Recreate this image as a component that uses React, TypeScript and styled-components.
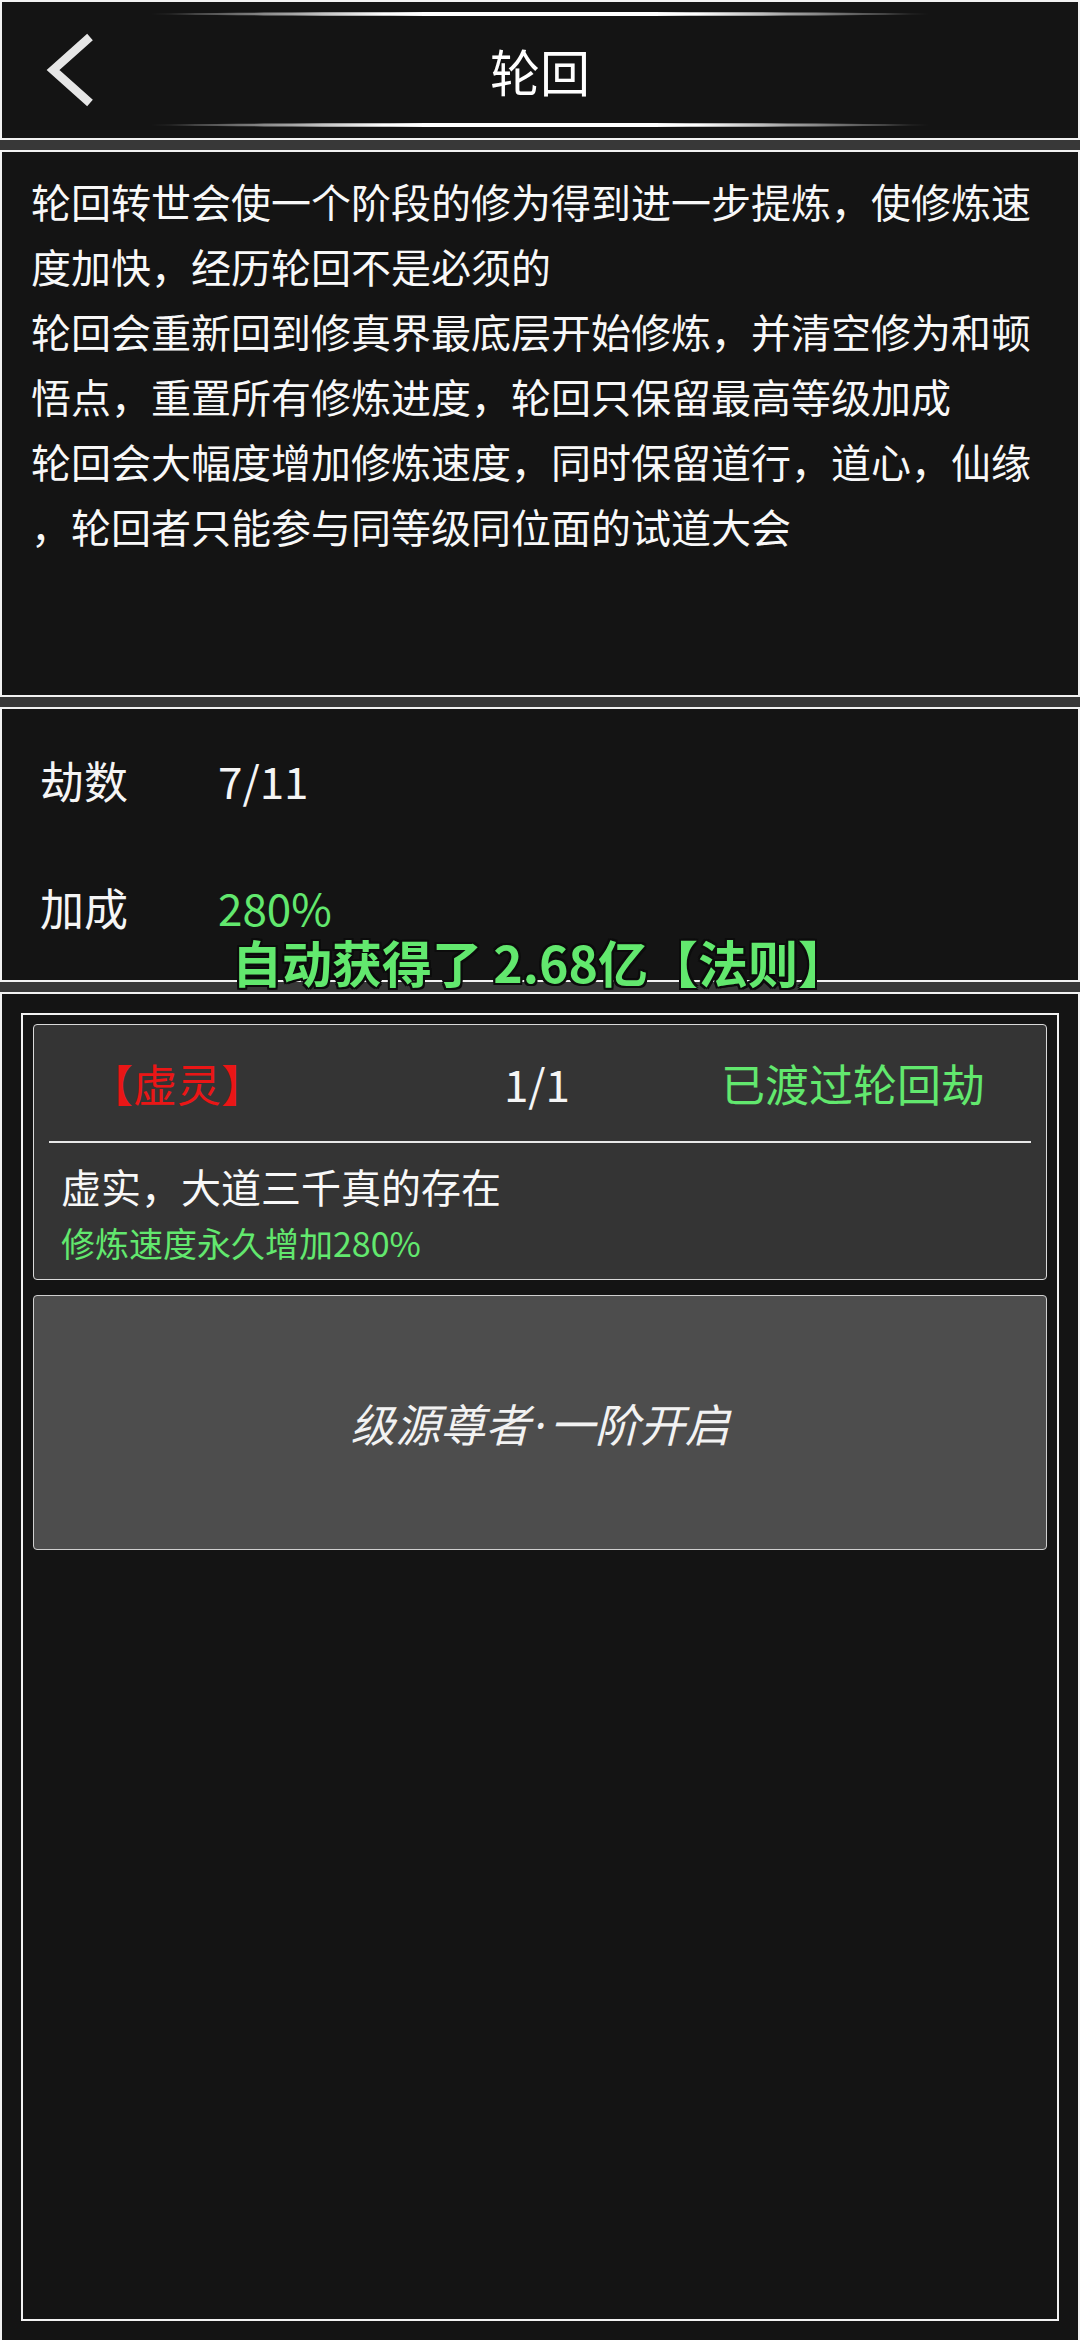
import React from "react";
import styled, { createGlobalStyle } from "styled-components";

const GlobalStyle = createGlobalStyle`
  html, body {
    margin: 0;
    padding: 0;
    overflow: hidden;
    background: #383838;
  }
  * { box-sizing: border-box; }
`;

const GREEN = "#62e86e";

function App() {
  return (
    <>
      <GlobalStyle />
      <Page>
        <Panel $h={140}>
          <Header>
            <Glow />
            <TitleRow>
              <BackButton>
                <svg width="60" height="80" viewBox="0 0 60 80">
                  <path d="M50 7 L13 40 L50 73" fill="none" stroke="#e6e6e6" strokeWidth="8.5" />
                </svg>
              </BackButton>
              <Title>轮回</Title>
              <span />
            </TitleRow>
            <Glow />
          </Header>
        </Panel>

        <Panel $h={547}>
          <Description>
            <p>轮回转世会使一个阶段的修为得到进一步提炼，使修炼速度加快，经历轮回不是必须的</p>
            <p>轮回会重新回到修真界最底层开始修炼，并清空修为和顿悟点，重置所有修炼进度，轮回只保留最高等级加成</p>
            <p>轮回会大幅度增加修炼速度，同时保留道行，道心，仙缘，轮回者只能参与同等级同位面的试道大会</p>
          </Description>
        </Panel>

        <Panel $h={275}>
          <Stats>
            <StatLabel>劫数</StatLabel>
            <StatValue>7/11</StatValue>
            <StatLabel>加成</StatLabel>
            <StatValue $color={GREEN}>280%</StatValue>
          </Stats>
        </Panel>

        <Panel>
          <Frame>
            <Card>
              <CardHead>
                <Tag>【虚灵】</Tag>
                <Count>1/1</Count>
                <Status>已渡过轮回劫</Status>
              </CardHead>
              <Divider />
              <CardBody>
                <CardTitle>虚实，大道三千真的存在</CardTitle>
                <CardEffect>修炼速度永久增加280%</CardEffect>
              </CardBody>
            </Card>
            <LockedCard>
              <LockedText>
                级源尊者<Dot>·</Dot>一阶开启
              </LockedText>
            </LockedCard>
          </Frame>
        </Panel>

        <Toast>自动获得了 2.68亿【法则】</Toast>
      </Page>
    </>
  );
}

const Page = styled.div`
  position: relative;
  width: 1080px;
  height: 2344px;
  display: flex;
  flex-direction: column;
  gap: 10px;
  background: #383838;
  font-family: "Noto Sans CJK SC", "Noto Sans", sans-serif;
  color: #fff;
`;

const Panel = styled.section<{ $h?: number }>`
  flex: ${(p) => (p.$h ? `0 0 ${p.$h}px` : "1 1 auto")};
  display: flex;
  flex-direction: column;
  background: #141414;
  border: 2px solid #f2f2f2;
`;

const Header = styled.header`
  flex: 1;
  display: flex;
  flex-direction: column;
  padding: 10px 0 11px;
`;

const Glow = styled.div`
  width: 780px;
  height: 4px;
  margin: 0 auto;
  border-radius: 50%;
  background: linear-gradient(
    90deg,
    rgba(255, 255, 255, 0) 0%,
    rgba(255, 255, 255, 0.35) 10%,
    #ffffff 30%,
    #ffffff 70%,
    rgba(255, 255, 255, 0.35) 90%,
    rgba(255, 255, 255, 0) 100%
  );
`;

const TitleRow = styled.div`
  flex: 1;
  display: grid;
  grid-template-columns: 140px 1fr 140px;
  align-items: center;
`;

const BackButton = styled.div`
  display: flex;
  align-items: center;
  padding-left: 38px;
`;

const Title = styled.h1`
  margin: 0;
  text-align: center;
  font-size: 50px;
  font-weight: 400;
  line-height: 1;
  color: #ffffff;
`;

const Description = styled.div`
  padding: 17px 29px;
  font-size: 40px;
  line-height: 65px;
  color: #f8f8f8;
  line-break: anywhere;
  word-break: break-all;

  p {
    margin: 0;
  }
`;

const Stats = styled.div`
  display: grid;
  grid-template-columns: 178px auto;
  grid-auto-rows: 64px;
  row-gap: 63px;
  align-items: center;
  padding: 39px 38px 0;
  font-size: 44px;
  line-height: 64px;
`;

const StatLabel = styled.span`
  color: #f5f5f5;
`;

const StatValue = styled.span<{ $color?: string }>`
  color: ${(p) => p.$color || "#f5f5f5"};
`;

const Toast = styled.div`
  position: absolute;
  top: 931px;
  left: 0;
  right: 0;
  text-align: center;
  font-size: 50px;
  font-weight: 700;
  line-height: 60px;
  color: ${GREEN};
  text-shadow: -2px -2px 0 #0c0c0c, 2px -2px 0 #0c0c0c, -2px 2px 0 #0c0c0c,
    2px 2px 0 #0c0c0c, 0 2px 0 #0c0c0c, 0 -2px 0 #0c0c0c, 2px 0 0 #0c0c0c,
    -2px 0 0 #0c0c0c;
  pointer-events: none;
`;

const Frame = styled.div`
  flex: 1;
  margin: 19px 19px 21px;
  border: 2px solid #f2f2f2;
  padding: 9px 10px;
  display: flex;
  flex-direction: column;
  gap: 15px;
`;

const Card = styled.div`
  height: 256px;
  background: #343434;
  border: 1px solid #d9d9d9;
  border-radius: 4px;
  display: flex;
  flex-direction: column;
`;

const CardHead = styled.div`
  height: 116px;
  display: grid;
  grid-template-columns: 1fr auto 1fr;
  align-items: center;
  padding: 0 61px 0 55px;
  font-size: 44px;
`;

const Tag = styled.span`
  justify-self: start;
  color: #ea1616;
`;

const Count = styled.span`
  color: #f5f5f5;
`;

const Status = styled.span`
  justify-self: end;
  color: ${GREEN};
`;

const Divider = styled.div`
  height: 2px;
  margin: 0 15px;
  background: #e8e8e8;
`;

const CardBody = styled.div`
  padding: 17px 27px 0;
  display: flex;
  flex-direction: column;
  gap: 8px;
`;

const CardTitle = styled.div`
  font-size: 40px;
  line-height: 52px;
  color: #f8f8f8;
`;

const CardEffect = styled.div`
  font-size: 34px;
  line-height: 46px;
  color: ${GREEN};
`;

const LockedCard = styled.div`
  height: 255px;
  background: #4d4d4d;
  border: 1px solid #cfcfcf;
  border-radius: 4px;
  display: flex;
  align-items: center;
  justify-content: center;
`;

const LockedText = styled.span`
  font-size: 45px;
  font-style: italic;
  color: #f2f2f2;
`;

const Dot = styled.span`
  font-family: "Noto Sans", "DejaVu Sans", sans-serif;
  margin: 0 4px;
`;

export default App;
